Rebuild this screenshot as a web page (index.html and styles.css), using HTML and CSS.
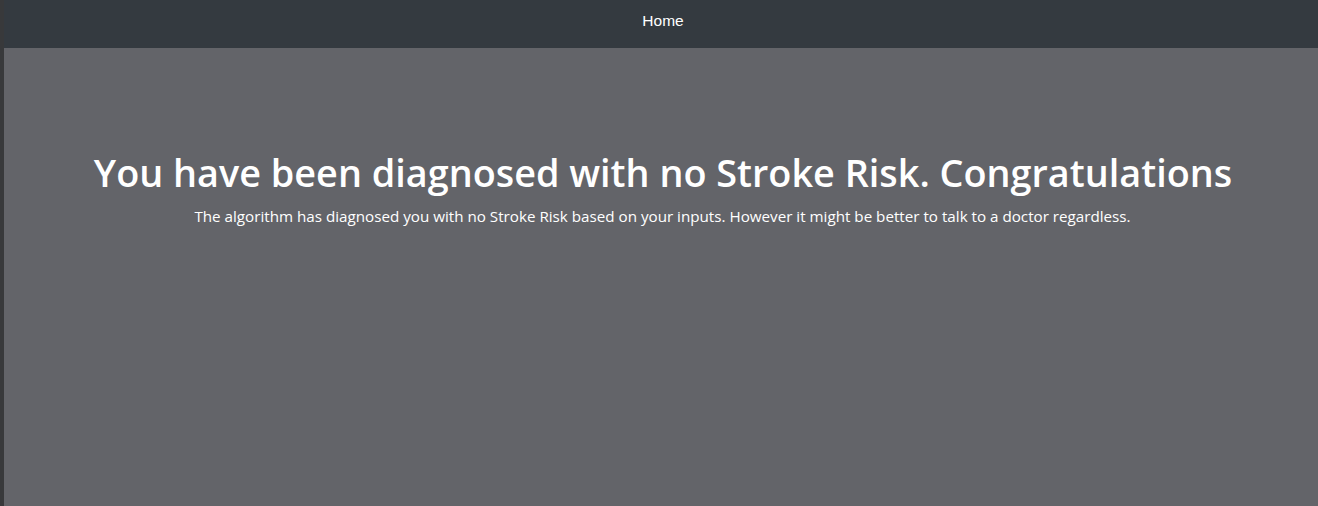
FILE: index.html
```html
<!DOCTYPE html>
<html>
<head>
<meta charset="utf-8">
<link rel="stylesheet" href="styles.css">
</head>
<body>
<div class="page">
  <div class="edge"></div>
  <div class="main">
    <nav class="navbar"><a class="nav-link" href="#">Home</a></nav>
    <section class="content">
      <h1 class="title">You have been diagnosed with no Stroke Risk. Congratulations</h1>
      <p class="lead">The algorithm has diagnosed you with no Stroke Risk based on your inputs. However it might be better to talk to a doctor regardless.</p>
    </section>
  </div>
</div>
</body>
</html>
```
FILE: styles.css
```css
html, body { margin: 0; padding: 0; height: 100%; }
body { background: #636469; font-family: "Open Sans", "Noto Sans", sans-serif; }
.page { display: flex; height: 506px; }
.edge { width: 4px; background: #38393b; flex: none; }
.main { flex: 1; display: flex; flex-direction: column; background: #636469; }
.navbar { height: 48px; background: #343a40; display: flex; align-items: center; justify-content: center; }
.nav-link { color: #fff; text-decoration: none; font-family: "Liberation Sans", Arial, sans-serif; font-size: 15.5px; margin-left: 4px; margin-top: -7px; }
.content { padding-top: 100px; text-align: center; color: #fff; }
.title { margin: 0; font-size: 37.8px; font-weight: 600; line-height: 50px; letter-spacing: 0; padding-left: 4px; }
.lead { margin: 7px 0 0; font-size: 15.2px; line-height: 22px; padding-left: 3px; }
```
